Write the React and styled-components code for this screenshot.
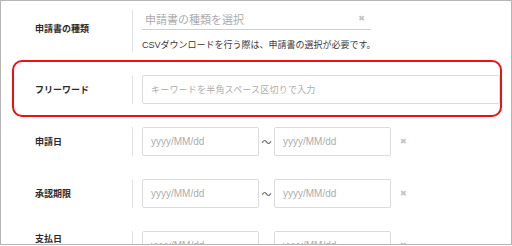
import styled, { createGlobalStyle } from "styled-components";

const GlobalStyle = createGlobalStyle`
    html, body {
        margin: 0;
        padding: 0;
        background: #ffffff;
    }
    * {
        box-sizing: border-box;
    }
`;

// the last row is cut by the frame, its label sits near the top of the row
const dateRows = [
    { label: "申請日" },
    { label: "承認期限" },
    { label: "支払日", offset: 1 },
];

const App = () => {
    return (
        <>
            <GlobalStyle />
            <Frame>
                <Rows>
                    <Row>
                        <Label $offset={12}>申請書の種類</Label>
                        <Field>
                            <SelectBox>
                                <span>申請書の種類を選択</span>
                                <Clear>✖</Clear>
                            </SelectBox>
                            <HelpText>CSVダウンロードを行う際は、申請書の選択が必要です。</HelpText>
                        </Field>
                    </Row>

                    <Row highlighted>
                        <Label>フリーワード</Label>
                        <Field>
                            <TextInput
                                $wide
                                placeholder="キーワードを半角スペース区切りで入力"
                            />
                        </Field>
                    </Row>

                    {dateRows.map((row) => (
                        <Row key={row.label}>
                            <Label $offset={row.offset}>{row.label}</Label>
                            <Field>
                                <DateRange>
                                    <TextInput placeholder="yyyy/MM/dd" />
                                    <Tilde>〜</Tilde>
                                    <TextInput placeholder="yyyy/MM/dd" />
                                    <Clear $gap>✖</Clear>
                                </DateRange>
                            </Field>
                        </Row>
                    ))}
                </Rows>
            </Frame>
        </>
    );
};

export default App;

const Frame = styled.div`
    width: 512px;
    height: 245px;
    border: 1px solid #b5b5b5;
    overflow: hidden;
    background: #ffffff;
    font-family: "Liberation Sans", "Noto Sans CJK JP", sans-serif;
`;

const Rows = styled.div`
    display: flex;
    flex-direction: column;
    gap: 23px;
    padding-top: 9px;
`;

const Row = styled.div.withConfig({
    shouldForwardProp: (prop) => prop !== "highlighted",
})`
    position: relative;
    display: flex;
    align-items: center;

    ${(props) => props.highlighted && `
        &::after {
            content: '';
            position: absolute;
            top: -15px;
            bottom: -13px;
            left: 11px;
            right: 9px;
            border: 2px solid #f01010;
            border-radius: 10px;
            pointer-events: none;
        }
    `}
`;

const Label = styled.div`
    width: 131px;
    flex-shrink: 0;
    align-self: ${(props) => (props.$offset !== undefined ? "flex-start" : "center")};
    padding-top: ${(props) => props.$offset || 0}px;
    padding-left: 34px;
    font-family: "Noto Sans CJK JP", sans-serif;
    font-size: 9px;
    line-height: 13px;
    font-weight: 700;
    color: #2b2b2b;
    white-space: nowrap;
`;

const Field = styled.div`
    border-left: 1px solid #e3e3e3;
    padding-left: 9px;
    display: flex;
    flex-direction: column;
`;

const SelectBox = styled.div`
    width: 229px;
    height: 20px;
    display: flex;
    align-items: center;
    justify-content: space-between;
    padding: 0 6px 2px 3px;
    border-bottom: 1px solid #cfcfcf;
    font-family: "Noto Sans CJK JP", sans-serif;
    font-size: 11px;
    color: #acacac;
`;

const Clear = styled.span`
    font-family: "DejaVu Sans", sans-serif;
    font-size: 8px;
    color: #c4c4c4;
    margin-left: ${(props) => (props.$gap ? "9px" : "0")};
`;

const HelpText = styled.div`
    margin-top: 8px;
    font-size: 9px;
    line-height: 14px;
    color: #3a3a3a;
    white-space: nowrap;
`;

const TextInput = styled.input`
    width: ${(props) => (props.$wide ? "358px" : "117px")};
    height: 29px;
    padding: 0 8px;
    border: 1px solid #dcdcdc;
    border-radius: 2px;
    outline: none;
    background: #ffffff;
    font-family: "Liberation Sans", "Noto Sans CJK JP", sans-serif;
    font-size: ${(props) => (props.$wide ? "9px" : "10px")};
    letter-spacing: ${(props) => (props.$wide ? "0.2px" : "0")};
    color: #333333;

    &::placeholder {
        color: #adadad;
    }
`;

const DateRange = styled.div`
    display: flex;
    align-items: center;
`;

const Tilde = styled.span`
    width: 15px;
    text-align: center;
    font-family: "Noto Sans CJK JP", sans-serif;
    font-size: 10px;
    color: #555555;
`;
